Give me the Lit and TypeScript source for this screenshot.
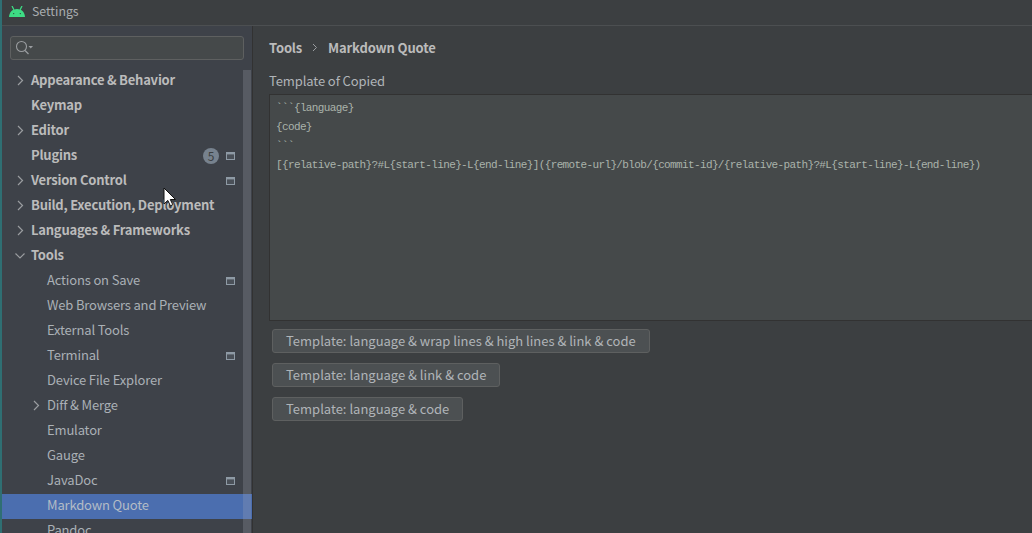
import { LitElement, html, css, svg } from "lit";
import { customElement } from "lit/decorators.js";

type Row = { t: string; lvl: 0 | 1; arrow?: "r" | "d"; badge?: string; mod?: boolean; sel?: boolean };

const rows: Row[] = [
  { t: "Appearance & Behavior", lvl: 0, arrow: "r" },
  { t: "Keymap", lvl: 0 },
  { t: "Editor", lvl: 0, arrow: "r" },
  { t: "Plugins", lvl: 0, badge: "5", mod: true },
  { t: "Version Control", lvl: 0, arrow: "r", mod: true },
  { t: "Build, Execution, Deployment", lvl: 0, arrow: "r" },
  { t: "Languages & Frameworks", lvl: 0, arrow: "r" },
  { t: "Tools", lvl: 0, arrow: "d" },
  { t: "Actions on Save", lvl: 1, mod: true },
  { t: "Web Browsers and Preview", lvl: 1 },
  { t: "External Tools", lvl: 1 },
  { t: "Terminal", lvl: 1, mod: true },
  { t: "Device File Explorer", lvl: 1 },
  { t: "Diff & Merge", lvl: 1, arrow: "r" },
  { t: "Emulator", lvl: 1 },
  { t: "Gauge", lvl: 1 },
  { t: "JavaDoc", lvl: 1, mod: true },
  { t: "Markdown Quote", lvl: 1, sel: true },
  { t: "Pandoc", lvl: 1 },
];

const lines = [
  "```{language}",
  "{code}",
  "```",
  "[{relative-path}?#L{start-line}-L{end-line}]({remote-url}/blob/{commit-id}/{relative-path}?#L{start-line}-L{end-line})",
];

const buttons = [
  "Template: language & wrap lines & high lines & link & code",
  "Template: language & link & code",
  "Template: language & code",
];

@customElement("app-root")
export class AppRoot extends LitElement {
  static styles = css`
    :host {
      display: block;
      width: 1032px;
      height: 533px;
      overflow: hidden;
      position: relative;
      background: #3c3f41;
      color: #bbbbbb;
      font-family: "Noto Sans CJK SC", "Noto Sans", sans-serif;
      font-size: 13px;
    }
    .win { display: flex; flex-direction: column; height: 533px; border-left: 2px solid #2f6f73; box-sizing: border-box; }
    .title {
      height: 26px; box-sizing: border-box; flex: none; display: flex; align-items: center; gap: 7px;
      padding: 0 0 3px 7px; border-bottom: 1px solid #4c4f51; background: #3c3f41; color: #a9adb0; font-size: 12.3px;
    }
    .body { flex: 1; display: flex; min-height: 0; }
    .side { width: 250px; flex: none; background: #3e4249; border-right: 1px solid #323232; position: relative; overflow: hidden; }
    .search {
      margin: 10px 8px 0 8px; height: 24px; width: 234px; box-sizing: border-box; border: 1px solid #5e6060; border-radius: 3px;
      background: #45494a; display: flex; align-items: center; padding-left: 4px;
    }
    .tree { margin-top: 9px; display: flex; flex-direction: column; }
    .row { height: 25px; box-sizing: border-box; padding-bottom: 3px; display: flex; align-items: center; position: relative; flex: none; }
    .row span.lb { white-space: nowrap; line-height: 22px; }
    .l0 { padding-left: 29px; font-weight: 700; color: #bbbbbb; letter-spacing: -0.22px; }
    .l1 { padding-left: 45px; color: #aab0b6; letter-spacing: -0.16px; }
    .sel { background: #4b6eaf; color: #b3bcc6; }
    .arrow { position: absolute; top: 6px; width: 10px; height: 11px; }
    .l0 .arrow { left: 13px; }
    .l1 .arrow { left: 29px; }
    .badge {
      position: absolute; left: 201px; top: 4px; width: 16px; height: 16px; border-radius: 50%;
      background: #77828e; color: #3c3f41; font-size: 12px; font-weight: 400; letter-spacing: 0; text-align: center; line-height: 16px;
    }
    .mod { position: absolute; left: 224px; top: 8px; width: 9px; height: 8px; }
    .scroll { position: absolute; left: 241px; top: 44px; width: 8px; height: 470px; background: rgba(166,172,185,.24); }
    .main { flex: 1; min-width: 0; padding: 12px 0 0 16px; overflow: hidden; }
    .crumb { display: flex; align-items: center; height: 19px; font-weight: 700; color: #bbbbbb; gap: 10px; letter-spacing: -0.15px; }
    .crumb svg { flex: none; }
    .label { margin-top: 15px; height: 18px; line-height: 18px; color: #b0b4b8; letter-spacing: -0.1px; }
    .area {
      margin-top: 4px; height: 227px; box-sizing: border-box; border: 1px solid #323232; border-right: none;
      background: #45494a; padding: 4px 0 0 6px; width: 800px;
      font-family: "Liberation Mono", "DejaVu Sans Mono", monospace; font-size: 11px; letter-spacing: -0.63px; color: #aab3ab;
    }
    .area div { height: 19px; line-height: 19px; white-space: pre; }
    .btns { display: flex; flex-direction: column; align-items: flex-start; gap: 10px; margin: 8px 0 0 3px; }
    button {
      all: unset; box-sizing: border-box; height: 24px; padding: 0 13px; border: 1px solid #5e6060; border-radius: 3px;
      background: #4c5052; color: #b0b4b8; font: inherit; line-height: 22px; white-space: nowrap;
    }
    .cursor { position: absolute; left: 163px; top: 187px; width: 13px; height: 20px; }
  `;

  private arrow(kind: "r" | "d") {
    return html`<svg class="arrow" viewBox="0 0 10 11" fill="none" stroke="#9a9da0" stroke-width="1.2">
      ${kind === "r" ? svg`<path d="M3 1l4.5 4.5L3 10"/>` : svg`<path d="M0.5 3.5L5 8l4.5-4.5"/>`}
    </svg>`;
  }

  private mod() {
    return html`<svg class="mod" viewBox="0 0 9 8"><rect x=".5" y=".5" width="8" height="7" fill="#4a5058" stroke="#8e9aa5"/><rect x="1" y="1" width="7" height="1.4" fill="#8e9aa5"/></svg>`;
  }

  render() {
    return html`
      <div class="win">
        <div class="title">
          <svg width="16" height="11" viewBox="0 0 16 11">
            <path fill="#3ddc84" d="M0 11C0.1 6.6 3.2 3 8 3c4.800 0 7.900 3.600 8 8z"/>
            <path stroke="#3ddc84" stroke-width="1.3" d="M3 0l2 4M13 0l-2 4"/>
            <circle cx="4.700" cy="7.600" r=".7" fill="#2b4a3a"/><circle cx="11.300" cy="7.600" r=".7" fill="#2b4a3a"/>
          </svg>
          <span>Settings</span>
        </div>
        <div class="body">
          <div class="side">
            <div class="search">
              <svg width="18" height="16" viewBox="0 0 18 16" fill="none">
                <circle cx="6.500" cy="6.500" r="5" stroke="#9a9da0" stroke-width="1.100"/>
                <path d="M10 10.500l3.500 3.500" stroke="#9a9da0" stroke-width="1.200"/>
                <path d="M13.500 6h4.500l-2.250 2.500z" fill="#9a9da0"/>
              </svg>
            </div>
            <div class="tree">
              ${rows.map(
                (r) => html`<div class="row l${r.lvl} ${r.sel ? "sel" : ""}">
                  ${r.arrow ? this.arrow(r.arrow) : ""}
                  <span class="lb">${r.t}</span>
                  ${r.badge ? html`<span class="badge">${r.badge}</span>` : ""}
                  ${r.mod ? this.mod() : ""}
                </div>`
              )}
            </div>
            <div class="scroll"></div>
          </div>
          <div class="main">
            <div class="crumb">
              <span>Tools</span>
              <svg width="6" height="9" viewBox="0 0 6 9" fill="none" stroke="#9a9da0"><path d="M1 1l3.500 3.500L1 8"/></svg>
              <span>Markdown Quote</span>
            </div>
            <div class="label">Template of Copied</div>
            <div class="area">${lines.map((l) => html`<div>${l}</div>`)}</div>
            <div class="btns">${buttons.map((b) => html`<button>${b}</button>`)}</div>
          </div>
        </div>
        <svg class="cursor" viewBox="0 0 13 20">
          <path d="M1 1v16l3.800-3.600 2.600 5.400 2.400-1.100-2.500-5.200h5.200z" fill="#fff" stroke="#111" stroke-width="1"/>
        </svg>
      </div>
    `;
  }
}
